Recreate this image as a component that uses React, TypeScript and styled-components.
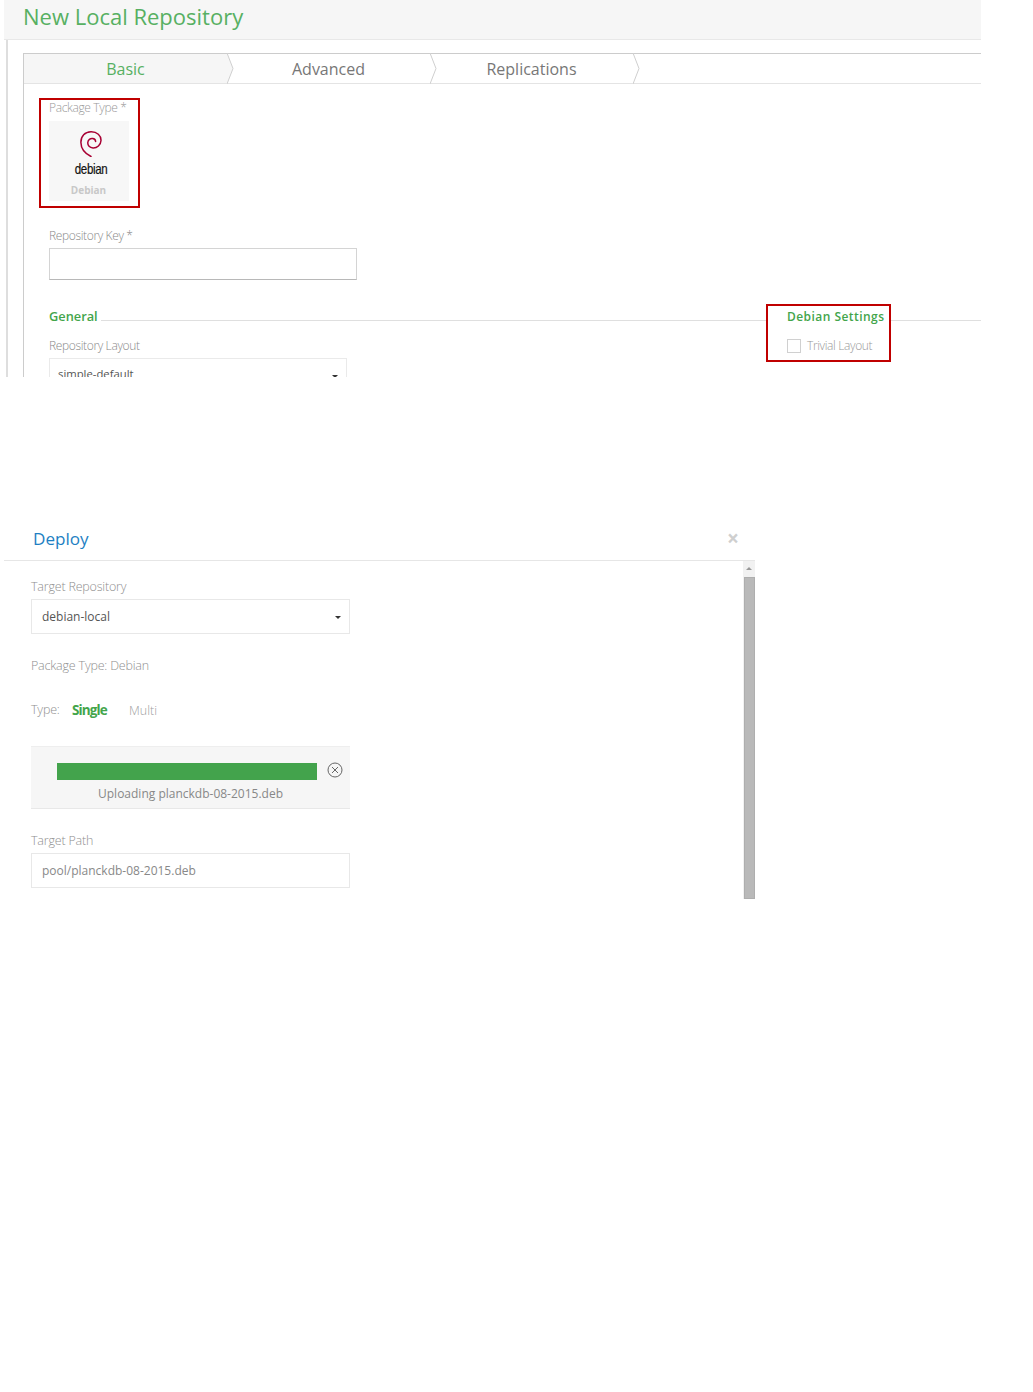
import React from "react";
import styled, { createGlobalStyle } from "styled-components";

const Global = createGlobalStyle`
  html, body { margin: 0; padding: 0; background: #fff; }
  body { font-family: "Open Sans", "Liberation Sans", sans-serif; }
  * { box-sizing: border-box; }
`;
const Page = styled.div`width: 1033px; height: 1392px; overflow: hidden; background: #fff;`;
const RepoPanel = styled.section`width: 981px; height: 377px; overflow: hidden;`;
const TitleBand = styled.header`
  margin-left: 4px; height: 40px; padding-left: 19px; background: #f6f6f6;
  border-bottom: 1px solid #e8e8e8;
`;
const Title = styled.h1`
  margin: 0; font-size: 22px; line-height: 33px; font-weight: 400; color: #57b062;
`;
const Card = styled.div`
  margin-left: 6px; height: 337px; padding: 13px 0 0 15px; border-left: 2px solid #dedede;
`;
const Wizard = styled.div`height: 324px; border-left: 1px solid #ccc;`;
const Tabs = styled.nav`
  display: flex; height: 31px; border-top: 1px solid #ccc; border-bottom: 1px solid #e4e4e4;
`;
const Tab = styled.div<{ $active?: boolean }>`
  position: relative; width: 203px; display: flex; align-items: center; justify-content: center;
  font-size: 16px; color: ${(p) => (p.$active ? "#57b062" : "#777")};
  background: ${(p) => (p.$active ? "#f6f6f6" : "transparent")};
`;
const Chevron = styled.svg`position: absolute; left: 100%; top: -1px; z-index: 1;`;
const Form = styled.div`padding: 14px 0 0 15px;`;
const PackageBox = styled.div`
  width: 101px; height: 110px; border: 2px solid #c00000; padding: 0 0 0 8px;
`;
const Label = styled.div<{ $faint?: boolean }>`
  font-size: 12px; line-height: 16px; font-weight: 300;
  letter-spacing: -0.36px; color: ${(p) => (p.$faint ? "#999" : "#8a8a8a")};
`;
const Tile = styled.div`
  margin-top: 5px; width: 80px; height: 80px; background: #f7f7f7; display: flex;
  flex-direction: column; align-items: center; padding-top: 10px;
`;
const Logo = styled.svg`display: block; margin-left: 4px;`;
const LogoWord = styled.div`
  font-family: "Liberation Sans", sans-serif; font-size: 15px; line-height: 14px; color: #111;
  margin: 5px 0 0 5px; letter-spacing: -0.5px; transform: scaleX(0.77);
  -webkit-text-stroke: 0.2px #111;
`;
const TileCaption = styled.div`
  margin-top: 7px; margin-right: 1px; font-size: 10px; line-height: 14px; font-weight: 700; color: #c8c8c8;
`;
const KeyField = styled.div`padding: 19px 0 0 10px;`;
const TallLabel = styled(Label)`line-height: 18px;`;
const KeyInput = styled.div`
  margin-top: 3px; width: 308px; height: 32px; border: 1px solid #d4d4d4; border-bottom-color: #b8b8b8;
`;
const Columns = styled.div`display: flex; margin-top: 24px;`;
const GeneralCol = styled.div`width: 727px; padding-left: 10px; flex: none;`;
const HeadingRow = styled.div`display: flex; align-items: flex-start; height: 24px;`;
const Heading = styled.h3`
  margin: 0; font-size: 12.8px; line-height: 24px; font-weight: 600; color: #43a54b;
`;
const Rule = styled.div`flex: 1; margin: 16px 0 0 3px; height: 1px; background: #dfdfdf;`;
const LayoutLabel = styled(TallLabel)`margin-top: 9px;`;
const LayoutSelect = styled.div`
  position: relative; margin-top: 3px; width: 298px; height: 36px; padding: 7px 0 0 8px;
  border: 1px solid #eaeaea; font-size: 11.3px; line-height: 16px; color: #555;
`;
const Caret = styled.span`
  position: absolute; right: 8px; top: 50%; margin-top: -1px; width: 0; height: 0;
  border-left: 3px solid transparent; border-right: 3px solid transparent; border-top: 3px solid #333;
`;
const SettingsBox = styled.div`
  flex: none; width: 125px; height: 58px; border: 2px solid #c00000; padding: 0 0 0 19px; background: #fff;
`;
const SettingsHeading = styled(Heading)`font-size: 12px; letter-spacing: 0.45px; line-height: 22px; white-space: nowrap;`;
const CheckRow = styled.div`display: flex; align-items: center; gap: 6px; margin-top: 10px;`;
const Check = styled.span`width: 14px; height: 14px; border: 1px solid #d0d0d0; background: #fff;`;
const TrailRule = styled.div`flex: 1; margin-top: 16px; height: 1px; background: #dfdfdf;`;

const Deploy = styled.section`margin: 138px 0 0 4px; width: 751px;`;
const ModalHead = styled.header`
  position: relative; height: 46px; padding-left: 29px; border-bottom: 1px solid #e6e6e6;
`;
const ModalTitle = styled.h2`margin: 0; font-size: 17.1px; line-height: 47px; font-weight: 400; color: #1e7fc3;`;
const Close = styled.span`
  position: absolute; right: 16px; top: 11px; font-size: 21px; line-height: 24px; font-weight: 700; color: #cfcfcf;
`;
const ModalBody = styled.div`display: flex; height: 338px; overflow: hidden;`;
const BodyContent = styled.div`flex: 1; padding: 17px 0 0 27px;`;
const FieldLabel = styled(Label)`font-size: 12.5px; line-height: 18px; letter-spacing: -0.2px; color: #8f8f8f;`;
const Control = styled.div`
  position: relative; margin-top: 3px; width: 319px; height: 35px; padding: 0 10px; display: flex; align-items: center;
  border: 1px solid #e8e8e8; font-size: 12px;
`;
const SelectValue = styled.span`color: #555;`;
const PathValue = styled.span`color: #888;`;
const PackageLine = styled(FieldLabel)`margin-top: 23px;`;
const TypeRow = styled.div`display: flex; align-items: center; margin-top: 25px; height: 20px;`;
const TypeLabel = styled(FieldLabel)`width: 41px;`;
const TypeActive = styled.span`
  width: 57px; font-size: 13.5px; font-weight: 700; letter-spacing: -0.9px; color: #43a54b;
`;
const TypeOption = styled.span`font-size: 12.5px; font-weight: 300; color: #a0a0a0;`;
const UploadBox = styled.div`
  position: relative; margin-top: 26px; width: 319px; height: 63px; padding: 16px 0 0 26px;
  background: #f6f6f6; border-top: 1px solid #eee; border-bottom: 1px solid #e8e8e8;
`;
const Progress = styled.div`width: 260px; height: 17px; background: #43a34c;`;
const Cancel = styled.svg`position: absolute; right: 7px; top: 15px;`;
const UploadText = styled.div`
  margin: 6px 0 0 -26px; text-align: center; font-size: 12px; line-height: 16px; color: #888;
`;
const PathLabel = styled(FieldLabel)`margin-top: 23px;`;
const Scrollbar = styled.div`flex: none; width: 12px; background: #f1f1f1; display: flex; flex-direction: column;`;
const ScrollArrow = styled.div`height: 16px; display: flex; justify-content: center; padding-top: 6px;`;
const ArrowUp = styled.span`
  width: 0; height: 0; border-left: 3px solid transparent; border-right: 3px solid transparent; border-bottom: 3px solid #999;
`;
const ScrollThumb = styled.div`flex: 1; margin-left: 1px; background: #b9b9b9; border: 1px solid #aeaeae;`;

const tabs = ["Basic", "Advanced", "Replications"];

export default function App() {
  return (
    <Page>
      <Global />
      <RepoPanel>
        <TitleBand><Title>New Local Repository</Title></TitleBand>
        <Card>
          <Wizard>
            <Tabs>
              {tabs.map((t, i) => (
                <Tab key={t} $active={i === 0}>
                  {t}
                  <Chevron width="8" height="31" viewBox="0 0 8 31">
                    <path d="M0 0 L6 15.5 L0 31" fill={i === 0 ? "#f6f6f6" : "#fff"} stroke="#cfcfcf" strokeWidth="1" />
                  </Chevron>
                </Tab>
              ))}
            </Tabs>
            <Form>
              <PackageBox>
                <Label $faint>Package Type *</Label>
                <Tile>
                  <Logo width="22" height="26" viewBox="0 0 22 26">
                    <path d="M11 25.5C6 23 1 18 .9 11.5 .8 5 5 1 11 .8 17 .7 21.2 4.5 21 9.5 20.8 14 17 17.2 13 17 9.7 16.8 7.5 14.5 7.8 11.5 8.1 8.9 10.3 7.3 12.6 7.6 14.3 7.8 15.5 9 15.6 10.4" fill="none" stroke="#a80033" strokeWidth="1.5" strokeLinecap="round" />
                  </Logo>
                  <LogoWord>debian</LogoWord>
                  <TileCaption>Debian</TileCaption>
                </Tile>
              </PackageBox>
              <KeyField>
                <TallLabel>Repository Key *</TallLabel>
                <KeyInput />
              </KeyField>
              <Columns>
                <GeneralCol>
                  <HeadingRow><Heading>General</Heading><Rule /></HeadingRow>
                  <LayoutLabel>Repository Layout</LayoutLabel>
                  <LayoutSelect>simple-default<Caret /></LayoutSelect>
                </GeneralCol>
                <SettingsBox>
                  <SettingsHeading>Debian Settings</SettingsHeading>
                  <CheckRow><Check /><Label $faint>Trivial Layout</Label></CheckRow>
                </SettingsBox>
                <TrailRule />
              </Columns>
            </Form>
          </Wizard>
        </Card>
      </RepoPanel>
      <Deploy>
        <ModalHead>
          <ModalTitle>Deploy</ModalTitle>
          <Close>×</Close>
        </ModalHead>
        <ModalBody>
          <BodyContent>
            <FieldLabel>Target Repository</FieldLabel>
            <Control><SelectValue>debian-local</SelectValue><Caret /></Control>
            <PackageLine>Package Type: Debian</PackageLine>
            <TypeRow>
              <TypeLabel>Type:</TypeLabel>
              <TypeActive>Single</TypeActive>
              <TypeOption>Multi</TypeOption>
            </TypeRow>
            <UploadBox>
              <Progress />
              <Cancel width="16" height="16" viewBox="0 0 16 16">
                <circle cx="8" cy="8" r="7" fill="none" stroke="#666" strokeWidth="1" />
                <path d="M5 5 L11 11 M11 5 L5 11" stroke="#666" strokeWidth="1" />
              </Cancel>
              <UploadText>Uploading planckdb-08-2015.deb</UploadText>
            </UploadBox>
            <PathLabel>Target Path</PathLabel>
            <Control><PathValue>pool/planckdb-08-2015.deb</PathValue></Control>
          </BodyContent>
          <Scrollbar>
            <ScrollArrow><ArrowUp /></ScrollArrow>
            <ScrollThumb />
          </Scrollbar>
        </ModalBody>
      </Deploy>
    </Page>
  );
}
